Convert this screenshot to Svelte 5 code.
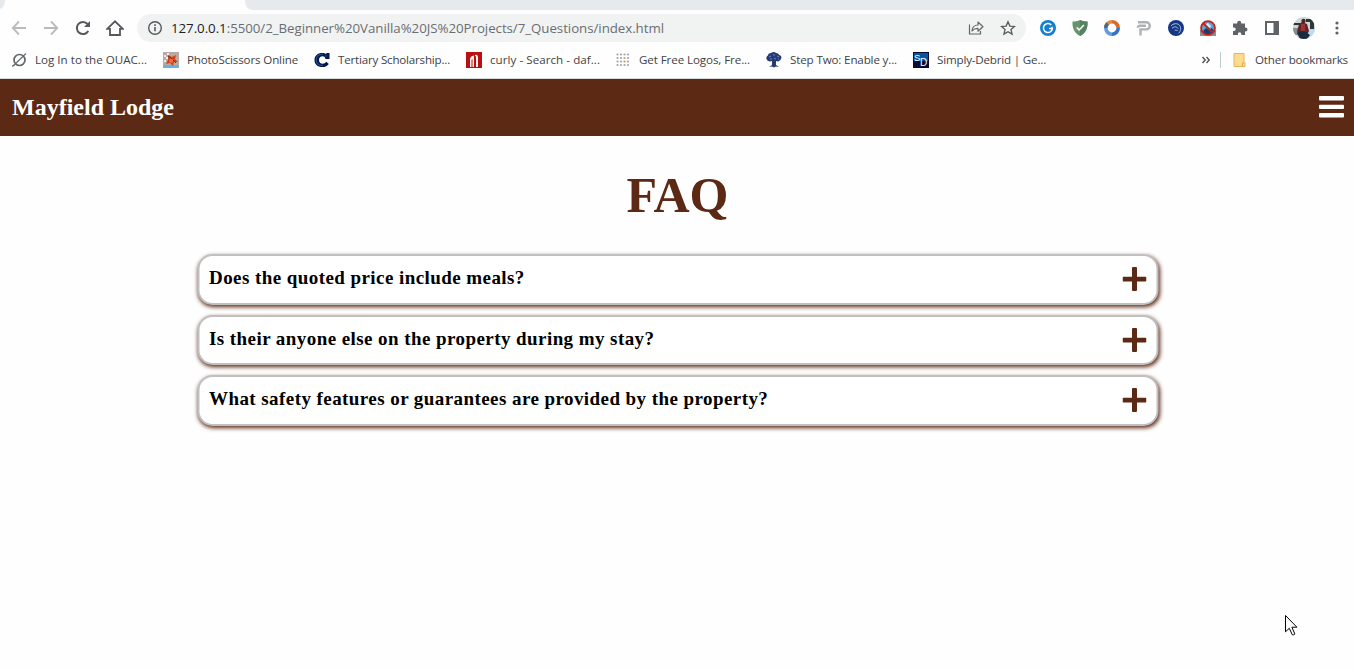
<script>
  const questions = [
    'Does the quoted price include meals?',
    'Is their anyone else on the property during my stay?',
    'What safety features or guarantees are provided by the property?'
  ];
  const bookmarks = [
    { icon: 'ouac', label: 'Log In to the OUAC...', width: 112, gap: 16 },
    { icon: 'photo', label: 'PhotoScissors Online', width: 111, gap: 16 },
    { icon: 'c', label: 'Tertiary Scholarship...', width: 112, gap: 16 },
    { icon: 'curly', label: 'curly - Search - daf...', width: 110, gap: 15 },
    { icon: 'dots', label: 'Get Free Logos, Fre...', width: 111, gap: 16 },
    { icon: 'tree', label: 'Step Two: Enable y...', width: 107, gap: 16 },
    { icon: 'sd', label: 'Simply-Debrid | Ge...', width: 109, gap: 16 }
  ];

  // Tightens or loosens the tracking so each label fills its slot.
  function fit(node, width) {
    const natural = node.getBoundingClientRect().width;
    node.style.letterSpacing = (width - natural) / node.textContent.length + 'px';
  }
</script>

<div class="page">
  <div class="tabs"><div class="tab"></div><div class="rest"></div></div>

  <div class="toolbar">
    <svg class="nav first" width="16" height="16" viewBox="0 0 16 16" fill="none" stroke="#b9bbbe" stroke-width="1.8"><path d="M15 8H2M8 1.5 1.7 8 8 14.5" /></svg>
    <svg class="nav" width="16" height="16" viewBox="0 0 16 16" fill="none" stroke="#b9bbbe" stroke-width="1.8"><path d="M1 8h13M8 1.5 14.3 8 8 14.5" /></svg>
    <svg class="nav" width="16" height="16" viewBox="0 0 16 16"><path d="M13.3 11A6.1 6.1 0 1 1 12.6 4" fill="none" stroke="#55585c" stroke-width="2" /><path d="M15 1v6H9z" fill="#55585c" /></svg>
    <svg class="nav" width="18" height="16" viewBox="0 0 18 16" fill="none" stroke="#55585c" stroke-width="1.8"><path d="M1.2 8.8 9 1.3l7.8 7.5H14v6.2H4V8.8z" /></svg>

    <div class="address">
      <svg width="16" height="16" viewBox="0 0 16 16"><circle cx="8" cy="8" r="6.3" fill="none" stroke="#55585c" stroke-width="1.4" /><path d="M7.2 7h1.6v4.3H7.2zM7.2 4.3h1.6v1.6H7.2z" fill="#55585c" /></svg>
      <span class="url" use:fit={493}><b>127.0.0.1</b>:5500/2_Beginner%20Vanilla%20JS%20Projects/7_Questions/index.html</span>
      <svg class="share" width="16" height="16" viewBox="0 0 16 16" fill="none" stroke="#65686c" stroke-width="1.2"><path d="M1.5 4.5V14h11v-3" /><path d="M4 11c.3-4 2.3-6 6-6V2l5 4.7-5 4.500V8.400C7.300 8.300 5.500 9.100 4 11z" stroke-linejoin="round" /></svg>
      <svg width="16" height="16" viewBox="0 0 16 16" fill="none" stroke="#55585c" stroke-width="1.3"><path d="m8 1.700 1.850 4.350 4.650.4-3.520 3.080 1.060 4.570L8 11.700l-4.040 2.400 1.060-4.570L1.500 6.450l4.650-.4z" /></svg>
    </div>

    <div class="extensions">
      <svg width="16" height="16" viewBox="0 0 16 16"><circle cx="8" cy="8" r="8" fill="#1681ca" /><path d="M11.200 4.900A4.500 4.500 0 1 0 12.400 8.600H9" fill="none" stroke="#fff" stroke-width="1.500" /><path d="m12.500 6-.1 3-2.200-.2" fill="#fff" /></svg>
      <svg width="16" height="16" viewBox="0 0 16 16"><path d="M8 0C5.500 1.200 3 1.500.5 1.500 0 8 2.500 13.500 8 16c5.500-2.500 8-8 7.500-14.500C13 1.500 10.500 1.200 8 0z" fill="#67936f" /><path d="M8 0v16c5.500-2.500 8-8 7.500-14.500C13 1.500 10.500 1.200 8 0z" fill="#568260" /><path d="m4.700 7.500 2.500 2.400L11.800 5" fill="none" stroke="#fff" stroke-width="1.500" /></svg>
      <svg width="16" height="16" viewBox="0 0 16 16" fill="none" stroke-width="3.600"><path d="M1.800 8A6.200 6.200 0 0 1 8 1.800" stroke="#e38b37" /><path d="M8 1.800A6.200 6.200 0 0 1 14.200 8" stroke="#d56c2f" /><path d="M14.200 8A6.200 6.200 0 0 1 8 14.200" stroke="#3774bb" /><path d="M8 14.200A6.200 6.200 0 0 1 1.800 8" stroke="#5b9de0" /><path d="M1.800 8A6.200 6.200 0 0 1 3.600 3.600" stroke="#4a688c" /></svg>
      <svg width="16" height="16" viewBox="0 0 16 16" fill="none" stroke="#b0b1b4" stroke-width="2.400"><path d="M2 2.200h8.200a3.600 3.600 0 0 1 0 7.200H4.500V15.500M10 5.800H3.800a2 2 0 0 0-2 2" /></svg>
      <svg width="16" height="16" viewBox="0 0 16 16"><circle cx="8" cy="8" r="8" fill="#153785" /><path d="M3 6C5 3.200 9.500 3 11.500 5.300c2 2.500 1.300 5.700-.8 8M4 8.500c2.400-2.700 5-1.700 6.200.1M6.800 10.500c1-.7 2.500-.3 3 .6" fill="none" stroke="#b5c7e9" stroke-width="1" /></svg>
      <svg width="16" height="16" viewBox="0 0 16 16"><path d="M0 10h16v6H0z" fill="#87909a" /><circle cx="8" cy="8" r="7" fill="#5da7d8" /><path d="m3 11 3-3 3 2 3-2 2 3-4 3H5z" fill="#163f70" /><path d="m5 5 3-2 3 3-2 3z" fill="#d7e9f5" /><circle cx="8" cy="8" r="6.900" fill="none" stroke="#c3251d" stroke-width="1.900" /><path d="m3 3 10 10" stroke="#c3251d" stroke-width="2" /></svg>
      <svg width="16" height="16" viewBox="0 0 16 16"><path d="M1 3.500h4.200v-.7a2 2 0 0 1 4 0v.7H13v4h.500a2 2 0 0 1 0 4H13V15H9.300v-1a1.700 1.700 0 0 0-3.400 0v1H1v-4h1a1.700 1.700 0 0 0 0-3.400H1z" fill="#5f6368" /></svg>
      <svg width="16" height="16" viewBox="0 0 16 16"><path fill-rule="evenodd" d="M1 1h14v14H1zm2 2v10h6.500V3z" fill="#5f6368" /></svg>
      <svg class="avatar" width="22" height="22" viewBox="0 0 22 22"><defs><clipPath id="profile"><circle cx="11" cy="11" r="11" /></clipPath></defs><g clip-path="url(#profile)"><path d="M0 0h22v22H0z" fill="#cfd7d5" /><path d="M0 6h7v2H0zM13 2h9v3h-9zM17 4h4v8h-4z" fill="#30373a" /><path d="M13 13h9v6h-9z" fill="#b8def4" /><path d="M0 11h5v7H0z" fill="#819192" /><path d="m6 7 3-2 5 2 2 7-2 4H6l-2-3z" fill="#642326" /><path d="M8 7h4v7H8z" fill="#9b3434" /><circle cx="10.500" cy="4" r="2.200" fill="#432d29" /><path d="m4 16 4-2 5 1 4 3-3 4H7z" fill="#182b40" /></g></svg>
      <svg class="menu" width="4" height="16" viewBox="0 0 4 16" fill="#5f6368"><circle cx="2" cy="3" r="1.600" /><circle cx="2" cy="8" r="1.600" /><circle cx="2" cy="13" r="1.600" /></svg>
    </div>
  </div>

  <div class="bookmarks">
    {#each bookmarks as b}
      <div class="bookmark" style:margin-right="{b.gap}px">
        <svg width="16" height="16" viewBox="0 0 16 16">
          {#if b.icon === 'ouac'}
            <circle cx="8.500" cy="8" r="5.500" fill="none" stroke="#62686b" stroke-width="1.700" /><path d="M1.500 14.500 15 1.500" stroke="#62716f" stroke-width="1.200" /><path d="m1 14 3-1" stroke="#62716f" />
          {:else if b.icon === 'photo'}
            <path d="M0 0h16v16H0z" fill="#bba9a0" /><path d="M0 13h16v3H0z" fill="#65b1e4" /><path d="m5 3 4 2 4-2-1 4 3 3-4 0-1 4-3-3-4 1 2-4z" fill="#d73e20" /><path d="m7 6 4 2-2 3-3-1z" fill="#eb742e" /><path d="M1 3h2v2H1zM4 1h2v2H4zM3 5h2v2H3zM1 8h2v2H1z" fill="#eee" /><path d="m5 4 4 3M10 8l3 3" stroke="#78302b" />
          {:else if b.icon === 'c'}
            <path d="M15.500 1v6h-4C11 5 10 4.300 8.500 4.300 6.300 4.300 5 5.800 5 8c0 2.300 1.400 3.700 3.600 3.700 1.700 0 2.700-.8 3.700-2l2.500 2.200C13.400 14 11.300 15 8.300 15 3.500 15 .5 12.300.5 8S3.700 1 8 1c2 0 3.200.4 4.300 1.300V1z" fill="#051744" /><path d="M12 3v2M9 2.500C4.500 2 2 4.500 2.200 8c.2 4 3 5.800 6.700 5.300" fill="none" stroke="#174c91" stroke-width="1.300" />
          {:else if b.icon === 'curly'}
            <path d="M0 0h16v16H0z" fill="#b90e12" /><path d="M4 15V7.500C4 5 5.500 4 8 3.500V15H6.500V7L5.500 8v7zM9 3c2-.5 3 .3 3 2.500V15h-2V4.500L9 4z" fill="#fff4e9" />
          {:else if b.icon === 'dots'}
            {#each [3, 6.500, 10, 13.500] as y}{#each [3, 6.500, 10, 13.500] as x}<circle cx={x - .5} cy={y - .5} r="1.100" fill={x === 10 && y === 10 ? '#d9952d' : '#a4a3a8'} />{/each}{/each}
          {:else if b.icon === 'tree'}
            <path d="M5 1c2-1.500 4-1 5 0 2 0 3 1 3 2 2 0 3 2 2 4-1 2-3 3-5 2v4l3 2-3-.5-2 1-2-1-3 .5 3-2V9C4 10 1 9 .5 7 0 5 1 4 2 3.500 2 2 3 1 5 1z" fill="#243b75" /><path d="m3 5 2-1M7 3h2M11 4l2 1M4 7h2M8 6l2 1M12 7h1" stroke="#7187b8" />
          {:else}
            <path d="M0 0h16v16H0z" fill="#090d33" /><path d="M1 1h14v8H1z" fill="#0b559f" /><text x="1" y="9" font-family="Liberation Sans" font-size="9.500" fill="#fff">S</text><text x="7" y="14" font-family="Liberation Sans" font-size="10" fill="#fff">D</text>
          {/if}
        </svg>
        <span use:fit={b.width}>{b.label}</span>
      </div>
    {/each}
    <div class="other">
      <svg width="10" height="10" viewBox="0 0 10 10" fill="none" stroke="#55585c" stroke-width="1.500"><path d="m1.500 2 2.700 3-2.700 3M5.500 2l2.700 3-2.700 3" /></svg>
      <i></i>
      <svg class="folder" width="13" height="16" viewBox="0 0 13 16"><path d="M1 1.500h10v9.500h1v3.500H1z" fill="#ffdc8d" stroke="#e6b45c" /><path d="M9.500 14v-3H11" fill="none" stroke="#e6a63f" /></svg>
      <span use:fit={93}>Other bookmarks</span>
    </div>
  </div>

  <header>
    <h2>Mayfield Lodge</h2>
    <svg width="25" height="22" viewBox="0 0 25 22" fill="#fff"><rect width="25" height="4.500" rx="1" /><rect y="8.700" width="25" height="4.300" rx="1" /><rect y="17" width="25" height="4.500" rx="1" /></svg>
  </header>

  <main>
    <h1>FAQ</h1>
    {#each questions as q}
      <section>
        <h3>{q}</h3>
        <svg width="24" height="24" viewBox="0 0 24 24" fill="#5c2914"><path d="M10.500 0h3a1 1 0 0 1 1 1v8.800H23a1 1 0 0 1 1 1v2.600a1 1 0 0 1-1 1h-8.500V23a1 1 0 0 1-1 1h-3a1 1 0 0 1-1-1v-8.600H1a1 1 0 0 1-1-1v-2.600a1 1 0 0 1 1-1h8.500V1a1 1 0 0 1 1-1z" /></svg>
      </section>
    {/each}
  </main>

  <svg class="cursor" width="13" height="22" viewBox="0 0 13 22"><path d="M.5.500v16.300l3.800-3.500 3 6.500q1.600.8 2.500-.9L6.900 12.200h5z" fill="#fff" stroke="#000" /></svg>
</div>

<style>
  :global(body) { margin: 0; }
  .page { position: relative; height: 670px; overflow: hidden; background: #fefefe; font-family: 'Open Sans', sans-serif; }
  svg { display: block; flex: none; }
  .tabs { display: flex; height: 10px; background: linear-gradient(90deg, #e7eaed 10px, #fefefe 10px 235px, #fefefe 256px); }
  .tab { width: 245px; background: #fefefe; clip-path: path('M5 0H245V10H0V9Q5 7 5 0Z'); }
  .rest { flex: 1; background: #e7eaed; border-bottom-left-radius: 8px; }
  .toolbar { display: flex; align-items: center; height: 36px; }
  .nav { margin-right: 16px; }
  .nav.first { margin-left: 11px; }
  .nav:nth-child(4) { margin: 0 13px 0 -1px; }
  .address { display: flex; align-items: center; box-sizing: border-box; width: 889px; height: 28px; padding: 0 10px; border-radius: 14px; background: #f1f3f3; }
  .url { margin-left: 8px; color: #6a6e72; font-size: 13.300px; line-height: 28px; white-space: nowrap; }
  .url b { color: #202124; font-weight: 400; }
  .share { margin: 0 16px 0 auto; }
  .extensions { display: flex; align-items: center; gap: 16px; margin-left: 14px; }
  .avatar { margin: 0 -3px; }
  .menu { margin-left: 7px; }
  .bookmarks { display: flex; align-items: center; box-sizing: border-box; height: 33px; padding: 0 6px 4px 11px; border-bottom: 1px solid #d9dcdd; color: #3f4347; font-size: 11.600px; line-height: 18px; white-space: nowrap; }
  .bookmark { display: flex; align-items: center; gap: 8px; }
  .bookmark span { flex: none; }
  .other { display: flex; align-items: center; margin-left: auto; }
  .other i { width: 1px; height: 16px; margin: 0 12px 0 9px; background: #bccdd2; }
  .other span { margin-left: 9px; }
  header { display: flex; align-items: center; justify-content: space-between; box-sizing: border-box; height: 57px; padding: 0 10px 2px 12px; background: #5c2914; }
  h1, h2, h3 { margin: 0; font-family: 'Liberation Serif', serif; font-weight: 700; }
  h2 { color: #fff; font-size: 24px; line-height: 28px; }
  h1 { padding: 31px 0 30px 1px; color: #5c2914; font-size: 50px; line-height: 57px; text-align: center; }
  section { display: flex; align-items: center; justify-content: space-between; box-sizing: border-box; width: 961px; height: 50.500px; margin: 0 auto 10px; padding: 0 10px; border: 2px solid #c0c0c0; border-radius: 15px; background: #fff; box-shadow: 1px 2px 4px #5c2914; transform: translateX(.5px); }
  h3 { padding-bottom: 2.500px; font-size: 19px; line-height: 22px; letter-spacing: .43px; }
  .cursor { position: absolute; left: 1285px; top: 615px; }
</style>
